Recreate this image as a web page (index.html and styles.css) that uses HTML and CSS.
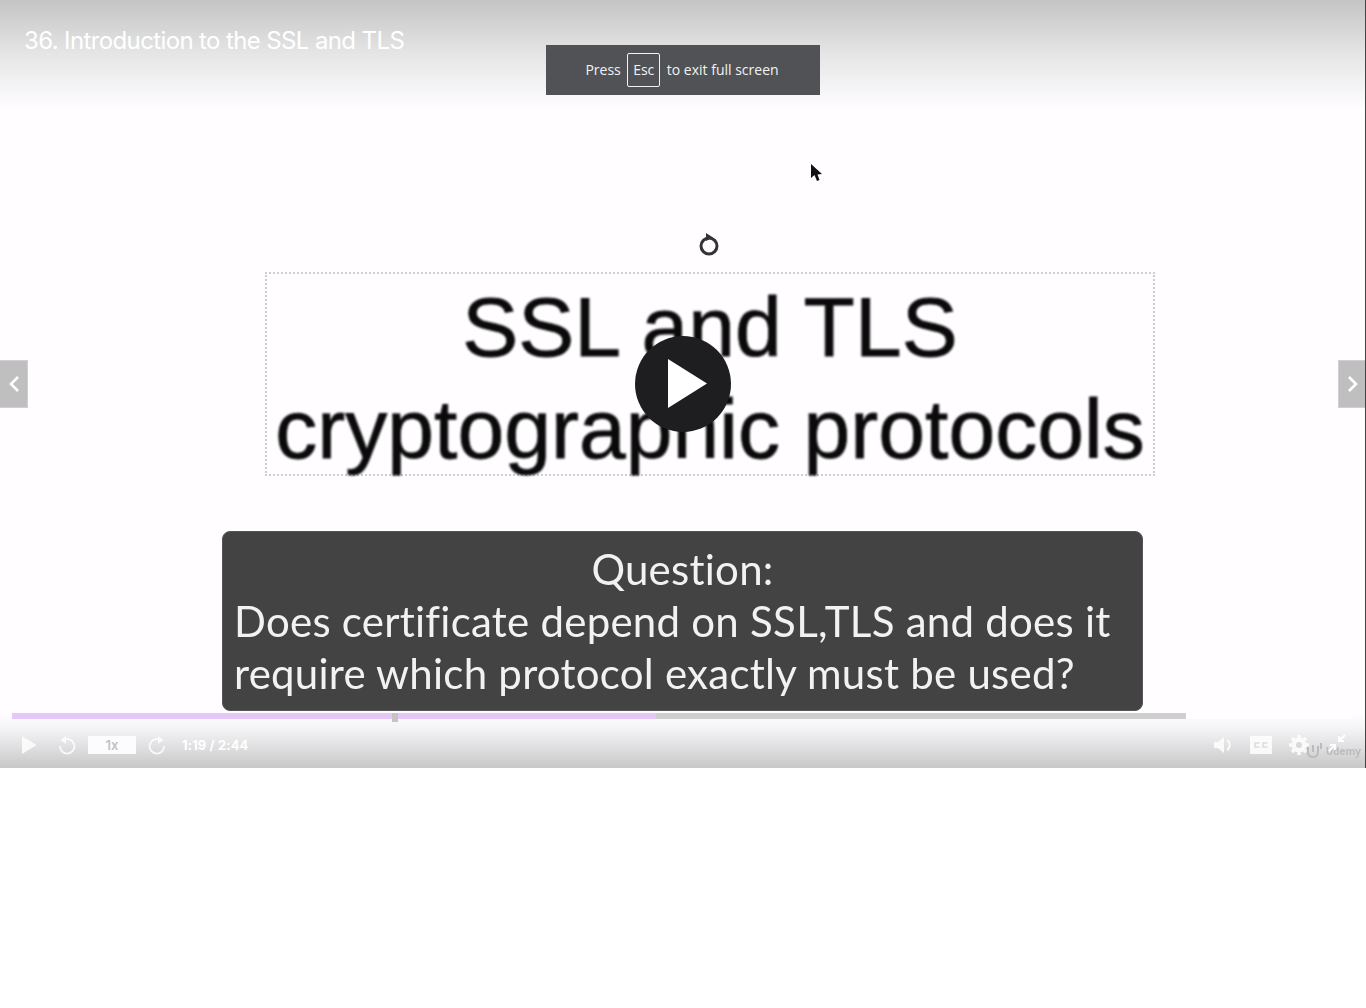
FILE: index.html
```html
<!DOCTYPE html>
<html lang="en">
<head>
    <meta charset="UTF-8">
    <title>36. Introduction to the SSL and TLS</title>
    <link rel="stylesheet" href="styles.css">
</head>
<body>
    <div class="player">
        <!-- slide of the video -->
        <div class="slide">
            <svg class="cursor" width="14" height="22" viewBox="0 0 14 22"><path d="M1 1 L1 15 L4.500 12 L7 18 L9.500 17 L7.500 11.500 L12 11 Z" fill="#111"/></svg>
            <svg class="rotate" width="22" height="26" viewBox="0 0 22 26">
                <circle cx="11" cy="15" r="8" fill="none" stroke="#333" stroke-width="3"/>
                <path d="M8 2 L15 6.500 L8 10 Z" fill="#333"/>
            </svg>
            <div class="textbox">
                <div class="slide-line">SSL and TLS</div>
                <div class="slide-line">cryptographic protocols</div>
            </div>
            <div class="question">
                <div class="q-title">Question:</div>
                <div class="q-line">Does certificate depend on SSL,TLS and does it</div>
                <div class="q-line">require which protocol exactly must be used?</div>
            </div>
        </div>

        <div class="top-shade">
            <h1 class="title">36. Introduction to the SSL and TLS</h1>
        </div>

        <div class="esc-note">
            <span>Press</span><span class="key">Esc</span><span>to exit full screen</span>
        </div>

        <button class="big-play">
            <svg width="40" height="50" viewBox="0 0 40 50"><path d="M0 0 L39 24.500 L0 49 Z" fill="#fff"/></svg>
        </button>

        <button class="side-btn prev">
            <svg width="12" height="18" viewBox="0 0 12 18"><path d="M10 2 L3 9 L10 16" fill="none" stroke="#fff" stroke-width="2.600"/></svg>
        </button>
        <button class="side-btn next">
            <svg width="12" height="18" viewBox="0 0 12 18"><path d="M2 2 L9 9 L2 16" fill="none" stroke="#fff" stroke-width="2.600"/></svg>
        </button>

        <div class="bottom-shade">
            <div class="progress">
                <div class="loaded"></div>
                <div class="played"></div>
                <div class="thumb"></div>
            </div>
            <div class="controls">
                <svg class="icon ctl-play" width="15" height="18" viewBox="0 0 15 18"><path d="M0 0 L14.500 9 L0 18 Z" fill="#fff"/></svg>
                <svg class="icon ctl-back" width="20" height="20" viewBox="0 0 20 20"><path d="M6 5.500 A7.200 7.200 0 1 1 3 11" fill="none" stroke="#fff" stroke-width="1.800"/><path d="M9 1 L9 9 L3.500 5 Z" fill="#fff"/></svg>
                <div class="speed">1x</div>
                <svg class="icon ctl-fwd" width="20" height="20" viewBox="0 0 20 20"><path d="M14 5.500 A7.200 7.200 0 1 0 17 11" fill="none" stroke="#fff" stroke-width="1.800"/><path d="M11 1 L11 9 L16.500 5 Z" fill="#fff"/></svg>
                <span class="time">1:19 / 2:44</span>
                <div class="spacer"></div>
                <svg class="icon ctl-vol" width="19" height="18" viewBox="0 0 19 18"><path d="M0 6 L4 6 L10 1 L10 17 L4 12 L0 12 Z" fill="#fff"/><path d="M13 4 A6 6 0 0 1 13 14" fill="none" stroke="#fff" stroke-width="2"/></svg>
                <svg class="icon ctl-cc" width="22" height="18" viewBox="0 0 22 18">
                    <rect width="22" height="18" rx="1" fill="#fff"/>
                    <path d="M9.500 7 L5 7 L5 11 L9.500 11 M17.500 7 L13 7 L13 11 L17.500 11" fill="none" stroke="#ddd" stroke-width="1.600"/>
                </svg>
                <svg class="icon ctl-gear" width="20" height="20" viewBox="0 0 20 20">
                    <circle cx="10" cy="10" r="5.500" fill="none" stroke="#fff" stroke-width="4"/>
                    <path d="M10 0 V20 M0 10 H20 M3 3 L17 17 M17 3 L3 17" stroke="#fff" stroke-width="3.400"/>
                    <circle cx="10" cy="10" r="3" fill="#d8d8d8"/>
                </svg>
                <svg class="icon ctl-exit" width="18" height="18" viewBox="0 0 18 18"><path d="M17 1 L11 7 M11 2 V7 H16 M1 17 L7 11 M2 11 H7 V16" fill="none" stroke="#fff" stroke-width="1.800"/></svg>
                <div class="brand">
                    <svg width="18" height="16" viewBox="0 0 18 16"><path d="M3 3 V9 Q3 14 8 14 Q13 14 13 9 V3 M8 2 V9 M16 0 V6" fill="none" stroke="#bcbcbd" stroke-width="2"/></svg>
                    <span>Udemy</span>
                </div>
            </div>
        </div>
    </div>
</body>
</html>
```

FILE: styles.css
```css
body {
    margin: 0;
    background-color: #fff;
    font-family: "Liberation Sans", Arial, sans-serif;
}

.player {
    position: relative;
    width: 1366px;
    height: 768px;
    overflow: hidden;
    background-color: #fffdff;
    box-sizing: border-box;
    border-right: 1px solid #444;
}

/* slide */
.slide {
    position: absolute;
    inset: 0;
}

.cursor {
    position: absolute;
    left: 810px;
    top: 163px;
    filter: blur(0.7px);
}

.rotate {
    position: absolute;
    left: 698px;
    top: 231px;
    filter: blur(0.7px);
}

.textbox {
    position: absolute;
    left: 265px;
    top: 272px;
    width: 890px;
    height: 204px;
    box-sizing: border-box;
    border: 2px dotted #cfcdd2;
    text-align: center;
    color: #0a0a0a;
    font-size: 84px;
    line-height: 102px;
    letter-spacing: 0.05px;
    white-space: nowrap;
    -webkit-text-stroke: 0.8px #0a0a0a;
}

.slide-line {
    position: relative;
    top: 2px;
    filter: blur(0.8px);
}

.question {
    position: absolute;
    left: 222px;
    top: 531px;
    width: 921px;
    height: 180px;
    box-sizing: border-box;
    padding: 11px 11px 0;
    border: 1px solid #555;
    border-radius: 8px;
    background-color: #434344;
    color: #f2f2f2;
    font-family: Lato, sans-serif;
    font-size: 42px;
    line-height: 52px;
    letter-spacing: 0.25px;
    font-variant-ligatures: none;
    white-space: nowrap;
}

.q-title {
    text-align: center;
}

.q-title,
.q-line {
    filter: blur(0.5px);
}

/* overlays */
.top-shade {
    position: absolute;
    left: 0;
    top: 0;
    width: 100%;
    height: 110px;
    background: linear-gradient(to bottom, #c4c4c5, #e6e6e7 50%, rgba(255, 255, 255, 0));
}

.title {
    margin: 0;
    padding: 26px 24px 0;
    color: #fff;
    font-family: Inter, sans-serif;
    font-size: 24px;
    line-height: 29px;
    font-weight: 400;
    letter-spacing: -0.62px;
}

.esc-note {
    position: absolute;
    left: 546px;
    top: 45px;
    width: 274px;
    height: 50px;
    box-sizing: border-box;
    padding-right: 2px;
    display: flex;
    align-items: center;
    justify-content: center;
    gap: 6.500px;
    background-color: #505256;
    color: #f2f2f2;
    font-family: "Open Sans", sans-serif;
    font-size: 14px;
}

.esc-note span:not(.key) {
    position: relative;
    top: -1px;
}

.key {
    display: flex;
    align-items: center;
    justify-content: center;
    width: 33px;
    height: 34px;
    box-sizing: border-box;
    padding-bottom: 2px;
    border: 1px solid #f2f2f2;
    border-radius: 2px;
}

.big-play {
    position: absolute;
    left: 635px;
    top: 336px;
    width: 96px;
    height: 96px;
    padding: 0 0 0 10px;
    border: none;
    border-radius: 50%;
    background-color: #1e1e20;
    display: flex;
    align-items: center;
    justify-content: center;
}

.side-btn {
    position: absolute;
    top: 360px;
    width: 28px;
    height: 48px;
    padding: 0;
    border: 1px solid #d0d0d0;
    background-color: #bfbfc0;
    display: flex;
    align-items: center;
    justify-content: center;
}

.prev {
    left: 0;
    border-left: none;
}

.next {
    left: 1338px;
    border-right: none;
}

/* bottom bar */
.bottom-shade {
    position: absolute;
    left: 0;
    bottom: 0;
    width: 100%;
    height: 55px;
    background: linear-gradient(to bottom, rgba(255, 255, 255, 0), #f3f2f4 30%, #c8c8c9);
}

.progress {
    position: relative;
    height: 6px;
    margin: 0 12px;
    background-color: rgba(255, 255, 255, 0.8);
}

.loaded {
    position: absolute;
    left: 0;
    top: 0;
    width: 1174px;
    height: 6px;
    background-color: #cfcfd0;
}

.played {
    position: absolute;
    left: 0;
    top: 0;
    width: 644px;
    height: 6px;
    background-color: #e5c8f7;
}

.thumb {
    position: absolute;
    left: 380px;
    top: 0;
    width: 6px;
    height: 9px;
    background-color: #c4c4c4;
}

.controls {
    position: relative;
    display: flex;
    align-items: center;
    height: 20px;
    margin-top: 16px;
    padding-left: 22px;
}

.icon {
    position: relative;
    z-index: 1;
    opacity: 0.85;
}

.ctl-play {
    margin-right: 20px;
}

.ctl-back {
    margin-right: 11px;
}

.speed {
    width: 48px;
    height: 18px;
    margin-right: 11px;
    background-color: #fcfcfe;
    color: #c2c2c4;
    font-family: Inter, sans-serif;
    font-size: 13px;
    font-weight: 600;
    line-height: 18px;
    text-align: center;
}

.ctl-fwd {
    margin-right: 15px;
}

.time {
    color: #fff;
    font-family: Inter, sans-serif;
    font-size: 13px;
    font-weight: 700;
    letter-spacing: 0.1px;
    white-space: nowrap;
}

.spacer {
    flex: 1;
}

.ctl-vol {
    margin-right: 17px;
}

.ctl-cc {
    margin-right: 17px;
}

.ctl-gear {
    margin-right: 19px;
}

.ctl-exit {
    top: -2px;
    margin-right: 19px;
    opacity: 1;
}

.brand {
    position: absolute;
    right: 4px;
    top: 8px;
    display: flex;
    align-items: center;
    gap: 3px;
    color: #bcbcbd;
    font-family: "Open Sans", sans-serif;
    font-size: 10px;
    font-weight: 700;
    filter: blur(0.7px);
}
```
